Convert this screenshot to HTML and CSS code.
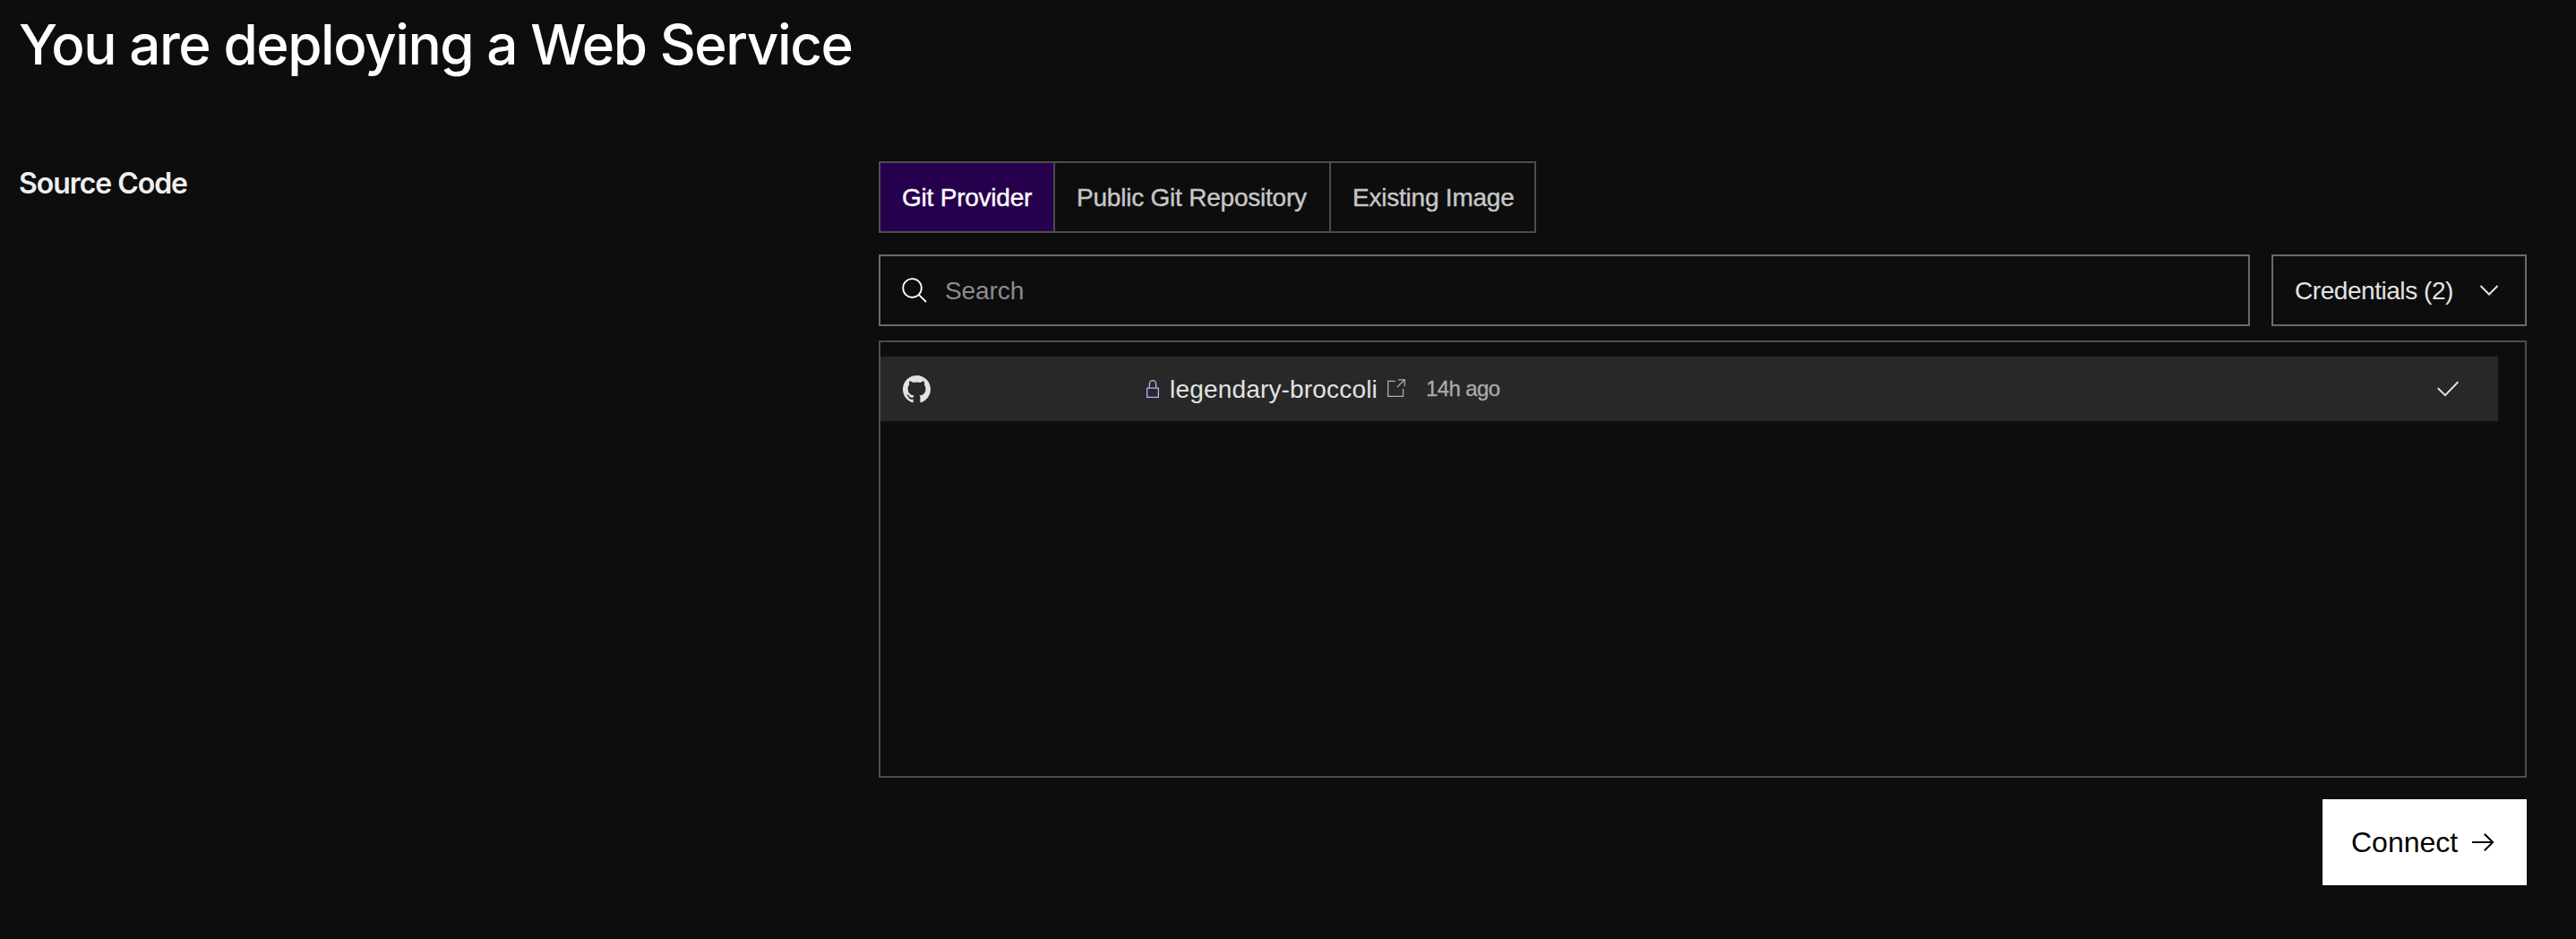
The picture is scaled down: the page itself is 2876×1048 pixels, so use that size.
FILE: index.html
```html
<!DOCTYPE html>
<html lang="en">
<head>
<meta charset="utf-8">
<title>New Web Service</title>
<link rel="stylesheet" href="styles.css">
</head>
<body>
<main class="page">
  <h1 class="title">You are deploying a Web Service</h1>
  <section class="source">
    <h2 class="section-title">Source Code</h2>
    <div class="panel">
      <div class="tabs">
        <button class="tab tab-git active">Git Provider</button>
        <button class="tab tab-public">Public Git Repository</button>
        <button class="tab tab-image">Existing Image</button>
      </div>
      <div class="filters">
        <div class="search">
          <svg class="icon-search" width="28" height="28" viewBox="0 0 28 28" fill="none" stroke="currentColor" stroke-width="1.8"><circle cx="11.5" cy="11.5" r="10.3"/><path d="M18.8 18.8 27 27"/></svg>
          <span class="placeholder">Search</span>
        </div>
        <button class="credentials">
          <span class="cred-label">Credentials (2)</span>
          <svg width="22" height="14" viewBox="0 0 22 14" fill="none" stroke="currentColor" stroke-width="2"><path d="M1.5 2 11 11.5 20.5 2"/></svg>
        </button>
      </div>
      <div class="repos">
        <div class="repo">
          <svg class="icon-github" width="31" height="31" viewBox="0 0 16 16" fill="currentColor"><path d="M8 0C3.58 0 0 3.58 0 8c0 3.54 2.29 6.53 5.47 7.59.4.07.55-.17.55-.38 0-.19-.01-.82-.01-1.49-2.01.37-2.53-.49-2.69-.94-.09-.23-.48-.94-.82-1.13-.28-.15-.68-.52-.01-.53.63-.01 1.08.58 1.23.82.72 1.21 1.87.87 2.33.66.07-.52.28-.87.51-1.07-1.78-.2-3.64-.89-3.64-3.95 0-.87.31-1.59.82-2.15-.08-.2-.36-1.02.08-2.12 0 0 .67-.21 2.2.82.64-.18 1.32-.27 2-.27s1.36.09 2 .27c1.53-1.04 2.2-.82 2.2-.82.44 1.1.16 1.92.08 2.12.51.56.82 1.27.82 2.15 0 3.07-1.87 3.75-3.65 3.95.29.25.54.73.54 1.48 0 1.07-.01 1.93-.01 2.2 0 .21.15.46.55.38A8.01 8.01 0 0 0 16 8c0-4.42-3.58-8-8-8z"/></svg>
          <svg class="icon-lock" width="14" height="20" viewBox="0 0 14 20" fill="none" stroke="currentColor" stroke-width="1.3"><path d="M.65 9.15h12.7v10.2H.65zM3.4 9V4.3a3.6 3.6 0 0 1 7.2 0V9"/></svg>
          <span class="repo-name">legendary-broccoli</span>
          <svg class="icon-external" width="20" height="20" viewBox="0 0 20 20" fill="none" stroke="currentColor" stroke-width="1.3"><path d="M9 2.4H.65v16.9h16.9V11M12 .8h7.3v7.3M19 1l-8 8"/></svg>
          <span class="repo-age">14h ago</span>
          <svg class="icon-check" width="24" height="18" viewBox="0 0 24 18" fill="none" stroke="currentColor" stroke-width="2"><path d="M.8 8.2 9 16.2 23.3 1.3"/></svg>
        </div>
      </div>
      <button class="connect">
        <span class="connect-label">Connect</span>
        <svg width="25" height="20" viewBox="0 0 25 20" fill="none" stroke="currentColor" stroke-width="2"><path d="M0 10h23.3M13.8.8 23.2 10l-9.4 9.2"/></svg>
      </button>
    </div>
  </section>
</main>
</body>
</html>
```
FILE: styles.css
```css
* { box-sizing: border-box; }

body {
  margin: 0;
  background: #0d0d0d;
  color: #e3e3e3;
  font-family: "Liberation Sans", Arial, sans-serif;
  font-size: 28px;
  line-height: 40px;
}

button {
  margin: 0;
  border: 0;
  background: none;
  color: inherit;
  font: inherit;
  white-space: nowrap;
}

svg { display: block; flex: none; }

.page {
  width: 2821px;
  height: 1048px;
  padding: 10px 0 0 21px;
}

.title {
  margin: 0;
  height: 80px;
  color: #fff;
  font: 500 62px/80px Inter, sans-serif;
  letter-spacing: -1.45px;
  white-space: nowrap;
}

.source {
  display: grid;
  grid-template-columns: 960px 1840px;
  margin-top: 90px;
}

.section-title {
  margin: 5px 0 0;
  color: #f0f0f0;
  font: 600 32px/40px Inter, sans-serif;
  letter-spacing: -1.05px;
}

.panel {
  display: flex;
  flex-direction: column;
}

.tabs {
  display: flex;
  align-self: flex-start;
  height: 80px;
  border: 2px solid #4d4d4d;
}

.tab {
  padding: 2px 0 0 24px;
  color: #c7c7c7;
  text-align: left;
  letter-spacing: -0.22px;
  -webkit-text-stroke: 0.4px currentColor;
}

.tab + .tab { border-left: 2px solid #4d4d4d; }
.tab-git { width: 193px; }
.tab-public { width: 308px; }
.tab-image { width: 229px; }
.tab.active { background: #26004d; color: #fff; }

.filters {
  display: flex;
  gap: 24px;
  margin-top: 24px;
}

.search, .credentials {
  display: flex;
  align-items: center;
  height: 80px;
  border: 2px solid #6b6b6b;
}

.search { flex: 1; padding-left: 24px; }
.icon-search { color: #fff; }
.placeholder { margin: 2px 0 0 20px; color: #8c8c8c; letter-spacing: -0.1px; }

.credentials {
  justify-content: space-between;
  width: 285px;
  padding: 0 29px 0 24px;
}

.cred-label { margin-top: 2px; letter-spacing: -0.45px; }

.repos {
  height: 488px;
  margin-top: 16px;
  padding-top: 16px;
  border: 2px solid #4d4d4d;
}

.repo {
  display: flex;
  align-items: center;
  width: 1806px;
  height: 72px;
  padding: 0 44px 0 25px;
  background: #282828;
}

.icon-lock { margin-left: 241px; color: #c9a6ff; }
.repo-name { margin: 2px 0 0 12px; letter-spacing: 0.18px; }
.icon-external { margin: -2px 0 0 11px; color: #ababab; }
.repo-age { margin-left: 23px; color: #ababab; font-size: 24px; letter-spacing: -0.6px; -webkit-text-stroke: 0.3px currentColor; }
.icon-check { margin-left: auto; }

.connect {
  display: flex;
  align-items: center;
  align-self: flex-end;
  justify-content: space-between;
  width: 228px;
  height: 96px;
  margin-top: 24px;
  padding: 0 36px 0 32px;
  background: #fff;
  color: #000;
  font-size: 32px;
}
```
